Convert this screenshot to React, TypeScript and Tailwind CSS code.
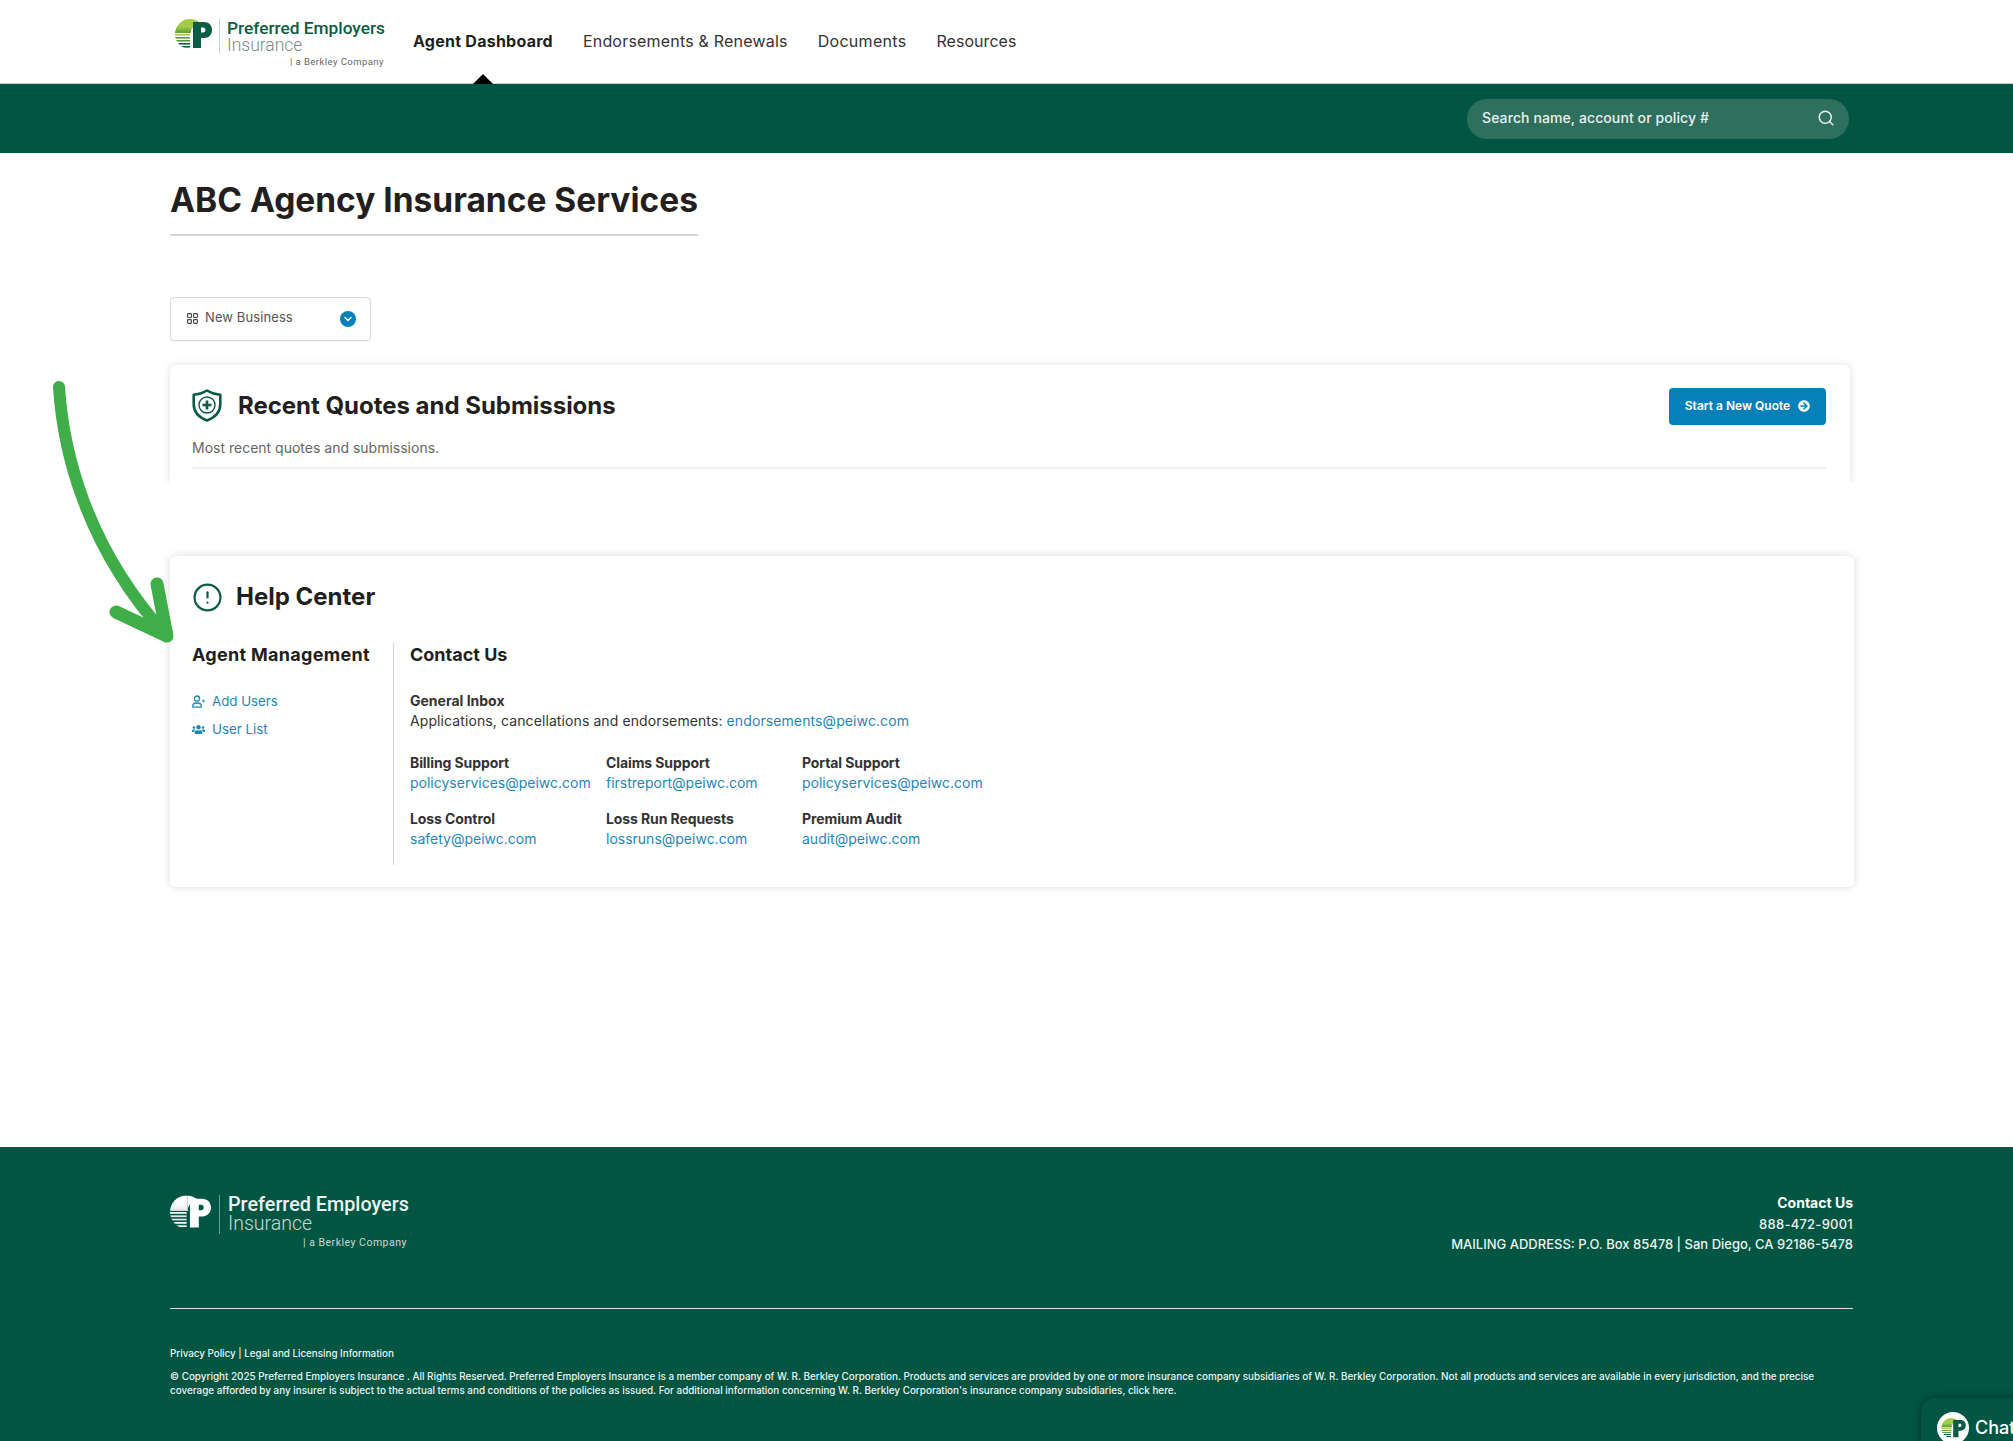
import React from "react";
import { CircleAlert, Search, LayoutGrid, ChevronDown } from "lucide-react";
import { FaArrowCircleRight, FaUsers } from "react-icons/fa";

function LogoMark({ w, h, lime, mid, dark, gid }: { w: number; h: number; lime: string; mid: string; dark: string; gid: string }) {
  return (
    <svg width={w} height={h} viewBox="0 0 37 30" className="shrink-0">
      <defs>
        <linearGradient id={gid} x1="0" y1="0" x2="0" y2="1">
          <stop offset="0" stopColor={lime} />
          <stop offset="0.55" stopColor={lime} />
          <stop offset="1" stopColor={mid} />
        </linearGradient>
        <clipPath id={gid + "c"}>
          <circle cx="15" cy="15" r="15" />
        </clipPath>
      </defs>
      <g clipPath={`url(#${gid}c)`}>
        <rect x="0" y="0" width="16" height="14" fill={`url(#${gid})`} />
        <path d="M16 0 H30 V2 C22 2 17 7 15.5 14 H16 Z" fill={lime} />
        <rect x="0" y="15" width="15" height="1.6" fill={lime} />
        <rect x="0" y="18" width="15" height="1.6" fill={mid} />
        <rect x="0" y="21" width="15" height="1.6" fill={mid} />
        <rect x="0" y="24" width="15" height="1.6" fill={dark} />
        <rect x="0" y="27" width="15" height="1.6" fill={dark} />
      </g>
      <path
        fillRule="evenodd"
        d="M18 3 H29 C34 3 37 6.5 37 11 C37 15.5 34 19 29 19 H26 V29 H18 Z M26 8.5 V13.5 H28 C29.6 13.5 30.4 12.5 30.4 11 C30.4 9.5 29.6 8.5 28 8.5 Z"
        fill={dark}
      />
    </svg>
  );
}

function ShieldIcon() {
  return (
    <svg width="30" height="33" viewBox="0 0 30 33" fill="none" stroke="#0b5c44" className="shrink-0">
      <path d="M15 1.5 C19 4 23.5 5.5 28.3 5.8 V15 C28.3 23 23 28.5 15 31.5 C7 28.5 1.7 23 1.7 15 V5.8 C6.5 5.5 11 4 15 1.5 Z" strokeWidth="2.6" strokeLinejoin="round" />
      <circle cx="15" cy="16" r="8" strokeWidth="1.4" />
      <path d="M15 11.5 V20.5 M10.5 16 H19.5" strokeWidth="2.6" />
    </svg>
  );
}

function AddUserIcon() {
  return (
    <svg width="13" height="13" viewBox="0 0 13 13" fill="none" stroke="currentColor" strokeWidth="1.3" className="mr-[7px] shrink-0">
      <circle cx="5" cy="3.6" r="2.6" />
      <path d="M0.8 12.2 V10.8 C0.8 9 2.6 8 5 8 C7.4 8 9.2 9 9.2 10.8 V12.2 Z" />
      <path d="M10 6 H12.8 M11.4 4.6 V7.4" strokeWidth="1" />
    </svg>
  );
}

export default function App() {
  return (
    <div className="relative flex h-[1441px] w-full flex-col overflow-hidden bg-white font-['Inter','Liberation_Sans',sans-serif] text-[#231f20]">
      {/* top navigation */}
      <header className="flex h-[84px] shrink-0 items-start pl-[175px]">
        <div className="relative mt-[19px] flex w-[209px] shrink-0 items-start">
          <LogoMark w={37} h={30} lime="#a4cc45" mid="#5d9a3f" dark="#0b5c44" gid="lg1" />
          <div className="ml-[7px] h-[34px] w-px bg-[#c5d3cd]" />
          <div className="ml-[7px] w-[157px] font-['Roboto',sans-serif]">
            <div className="whitespace-nowrap text-[17.3px] leading-[19px] font-medium text-[#0b5c44]">Preferred Employers</div>
            <div className="text-[17.5px] leading-[15px] font-light text-[#7d8a86]">Insurance</div>
            <div className="mt-[2px] whitespace-nowrap text-right text-[9.5px] leading-[14px] tracking-[0.45px] text-[#666]">| a Berkley Company</div>
          </div>
        </div>
        <nav className="ml-[29px] flex h-full gap-[30px] pt-[30px] text-[16px] leading-[22px] text-[#333]">
          <div className="relative font-bold tracking-[0.25px] text-[#231f20]">
            Agent Dashboard
            <span className="absolute top-[44px] left-1/2 -ml-[10px] h-0 w-0 border-x-[10px] border-b-[10px] border-x-transparent border-b-black" />
          </div>
          <div className="tracking-[0.2px]">Endorsements &amp; Renewals</div>
          <div className="tracking-[0.3px]">Documents</div>
          <div className="tracking-[0.05px]">Resources</div>
        </nav>
      </header>

      {/* search band */}
      <div className="flex h-[69px] shrink-0 items-center justify-end bg-[#005643] pr-[164px] shadow-[0_-1px_0_#c9cfcd]">
        <div className="flex h-[40px] w-[382px] items-center justify-between rounded-full bg-[#2e6f5e] pr-[14px] pb-[2px] pl-[15px]">
          <span className="text-[14px] font-medium tracking-[0.1px] text-[#eaf2ef]">Search name, account or policy #</span>
          <Search size={18} strokeWidth={2} className="text-[#e6efec]" />
        </div>
      </div>

      {/* main */}
      <main className="flex-1 pr-[159px] pl-[170px]">
        <div className="w-[528px] border-b-2 border-[#d6d6d6] pt-[25px] pb-[12px]">
          <h1 className="text-[33.5px] leading-[44px] font-bold whitespace-nowrap">ABC Agency Insurance Services</h1>
        </div>

        <div className="mt-[61px] flex h-[44px] w-[201px] items-center justify-between rounded-[4px] border border-[#d9d9d9] pr-[14px] pl-[15px] shadow-[0_1px_2px_rgba(0,0,0,0.05)]">
          <div className="flex items-center gap-[6px] pb-[2px]">
            <LayoutGrid size={13} strokeWidth={2} className="text-[#444]" />
            <span className="text-[13px] tracking-[0.1px] text-[#555]">New Business</span>
          </div>
          <span className="flex h-[16px] w-[16px] items-center justify-center rounded-full bg-[#0680b8]">
            <ChevronDown size={12} strokeWidth={3} className="text-white" />
          </span>
        </div>

        {/* recent quotes */}
        <section className="mt-[24px] mr-[4px] h-[118px] rounded-t-[6px] bg-white pt-[23px] pr-[24px] pl-[22px] shadow-[0_0_8px_rgba(0,0,0,0.13)] [clip-path:inset(-10px_-10px_0_-10px)]">
          <div className="flex h-[37px] items-center justify-between">
            <div className="flex items-center pb-[2px]">
              <ShieldIcon />
              <h2 className="ml-[16px] text-[24px] leading-[32px] font-bold tracking-[-0.02px] whitespace-nowrap">Recent Quotes and Submissions</h2>
            </div>
            <button className="flex h-[37px] w-[157px] items-center justify-center gap-[8px] rounded-[4px] bg-[#0680b8] pb-[1px] text-[12px] font-semibold text-white">
              Start a New Quote
              <FaArrowCircleRight size={12} />
            </button>
          </div>
          <p className="mt-[13px] text-[14px] leading-[20px] text-[#666]">Most recent quotes and submissions.</p>
          <div className="mt-[9px] h-[2px] bg-[#f0f0f0]" />
        </section>

        {/* help center */}
        <section className="mt-[73px] h-[331px] rounded-[6px] bg-white px-[22px] pt-[25px] shadow-[0_0_8px_rgba(0,0,0,0.15)]">
          <div className="flex h-[32px] items-center">
            <CircleAlert size={31} strokeWidth={1.7} className="text-[#0b5c44]" />
            <h2 className="ml-[13px] text-[24px] leading-[32px] font-bold tracking-[0px]">Help Center</h2>
          </div>
          <div className="mt-[30px] flex h-[222px]">
            <div className="w-[202px] shrink-0 border-r border-[#d9d9d9]">
              <h3 className="text-[18px] leading-[24px] font-bold tracking-[0.3px] whitespace-nowrap">Agent Management</h3>
              <div className="mt-[24px] flex flex-col gap-[8px] text-[13.3px] leading-[20px] text-[#1f87b8]">
                <a className="flex items-center">
                  <AddUserIcon />
                  Add Users
                </a>
                <a className="flex items-center">
                  <FaUsers size={13} className="mr-[7px]" />
                  User List
                </a>
              </div>
            </div>
            <div className="pl-[16px] text-[14px] leading-[20px]">
              <h3 className="text-[18px] leading-[24px] font-bold">Contact Us</h3>
              <div className="mt-[24px] font-bold text-[#333]">General Inbox</div>
              <div className="tracking-[0.1px] text-[#333]">
                Applications, cancellations and endorsements: <a className="text-[#1f87b8]">endorsements@peiwc.com</a>
              </div>
              <div className="mt-[22px] grid grid-cols-[196px_196px_196px] gap-y-[16px]">
                {[
                  ["Billing Support", "policyservices@peiwc.com"],
                  ["Claims Support", "firstreport@peiwc.com"],
                  ["Portal Support", "policyservices@peiwc.com"],
                  ["Loss Control", "safety@peiwc.com"],
                  ["Loss Run Requests", "lossruns@peiwc.com"],
                  ["Premium Audit", "audit@peiwc.com"],
                ].map(([label, mail]) => (
                  <div key={label + mail}>
                    <div className="font-bold tracking-[-0.1px] text-[#333]">{label}</div>
                    <a className="whitespace-nowrap text-[#1f87b8]">{mail}</a>
                  </div>
                ))}
              </div>
            </div>
          </div>
        </section>
      </main>

      {/* footer */}
      <footer className="h-[294px] shrink-0 bg-[#005643] pr-[160px] pl-[170px] text-white">
        <div className="flex items-start justify-between pt-[46px]">
          <div className="mt-[2px] flex items-start">
            <LogoMark w={41} h={34} lime="#ffffff" mid="#dfe9e5" dark="#ffffff" gid="lg2" />
            <div className="ml-[8px] h-[39px] w-px bg-[#6f9a8d]" />
            <div className="ml-[8px] w-[179px] font-['Roboto',sans-serif]">
              <div className="whitespace-nowrap text-[19.8px] leading-[20px] font-medium text-[#eef4f2]">Preferred Employers</div>
              <div className="text-[19.5px] leading-[18px] font-light text-[#c9dad4]">Insurance</div>
              <div className="mt-[3px] text-right text-[10.5px] leading-[14px] tracking-[0.5px] text-[#c9dad4]">| a Berkley Company</div>
            </div>
          </div>
          <div className="text-right text-[13px] leading-[20.5px] font-medium text-[#edf3f1]">
            <div className="text-[14px] font-bold text-white">Contact Us</div>
            <div className="tracking-[0.25px]">888-472-9001</div>
            <div>MAILING ADDRESS: P.O. Box 85478 | San Diego, CA 92186-5478</div>
          </div>
        </div>
        <div className="mt-[53px] h-px bg-[#d5e2de]" />
        <div className="mt-[38px] text-[9.8px] leading-[14px] font-medium text-[#eef4f2]">Privacy Policy | Legal and Licensing Information</div>
        <p className="mt-[8px] pr-[20px] text-[9.9px] leading-[14px] font-medium text-[#eef4f2]">
          © Copyright 2025 Preferred Employers Insurance . All Rights Reserved. Preferred Employers Insurance is a member company of W. R. Berkley Corporation. Products and services are provided by one or more insurance company subsidiaries of W. R. Berkley Corporation. Not all products and services are available in every jurisdiction, and the precise coverage afforded by any insurer is subject to the actual terms and conditions of the policies as issued. For additional information concerning W. R. Berkley Corporation's insurance company subsidiaries, click here.
        </p>
      </footer>

      {/* chat launcher */}
      <div className="absolute top-[1398px] left-[1921px] flex h-[60px] w-[120px] items-start gap-[6px] rounded-tl-[14px] bg-[#005643] pt-[14px] pl-[16px] shadow-[0_0_8px_rgba(0,0,0,0.4)]">
        <span className="flex h-[32px] w-[32px] shrink-0 items-center justify-center rounded-full bg-white">
          <LogoMark w={25} h={20} lime="#a4cc45" mid="#5d9a3f" dark="#0b5c44" gid="lg3" />
        </span>
        <span className="text-[18px] leading-[32px] font-medium text-white">Chat</span>
      </div>

      {/* annotation arrow */}
      <svg className="pointer-events-none absolute top-0 left-0" width="220" height="680" viewBox="0 0 220 680">
        <path d="M59 387 C63 450 85 545 165 634" fill="none" stroke="#3fae49" strokeWidth="12" strokeLinecap="round" />
        <path d="M157 584 L167 636 L116 612" fill="none" stroke="#3fae49" strokeWidth="13" strokeLinecap="round" strokeLinejoin="round" />
      </svg>
    </div>
  );
}
